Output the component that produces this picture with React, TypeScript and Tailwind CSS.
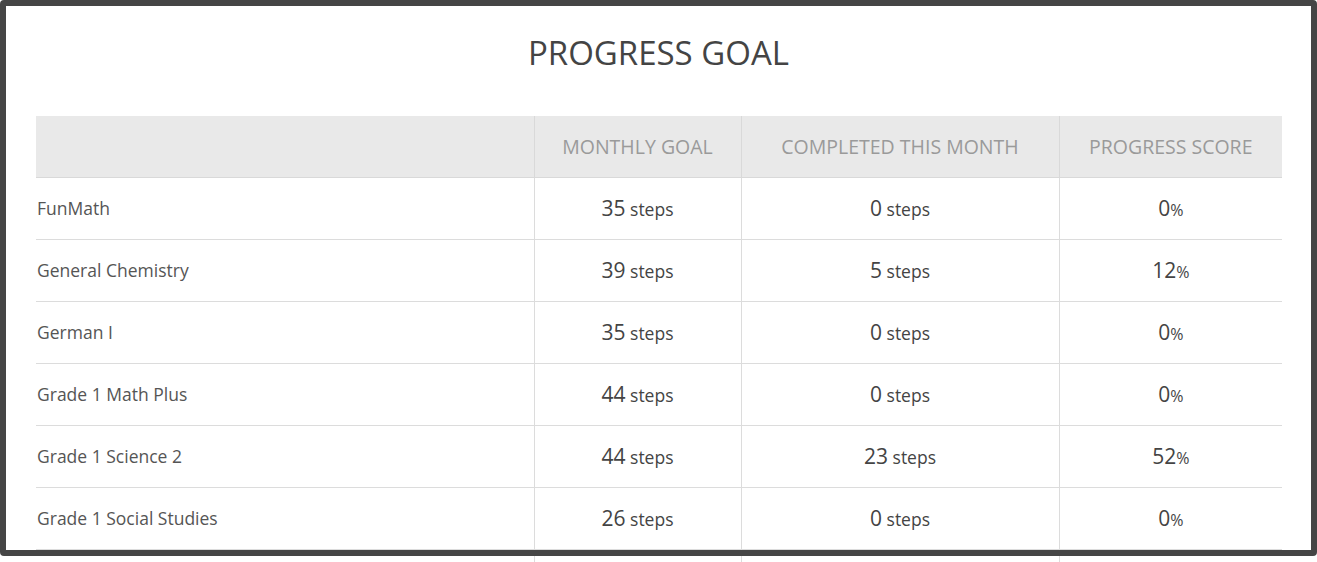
import React from 'react'

type Row = {
  name: string
  goal: number
  done: number
  score: number
}

const rows: Row[] = [
  { name: 'FunMath', goal: 35, done: 0, score: 0 },
  { name: 'General Chemistry', goal: 39, done: 5, score: 12 },
  { name: 'German I', goal: 35, done: 0, score: 0 },
  { name: 'Grade 1 Math Plus', goal: 44, done: 0, score: 0 },
  { name: 'Grade 1 Science 2', goal: 44, done: 23, score: 52 },
  { name: 'Grade 1 Social Studies', goal: 26, done: 0, score: 0 },
]

const Steps = ({ n }: { n: number }) => (
  <>
    <span className="text-[21px]">{n}</span>
    <span className="text-[17.5px]"> steps</span>
  </>
)

const App = () => {
  return (
    <div
      className="relative h-[562px] w-full overflow-hidden bg-white text-[#444]"
      style={{ fontFamily: '"Open Sans", "Liberation Sans", sans-serif' }}
    >
      <div className="px-[36px] pt-[30px]">
        <h1 className="text-center text-[33px] leading-[46px] font-normal text-[#444]">PROGRESS GOAL</h1>
        <table className="mt-[40px] w-[1246px] table-fixed border-collapse">
          <colgroup>
            <col className="w-[498px]" />
            <col className="w-[207px]" />
            <col className="w-[318px]" />
            <col className="w-[223px]" />
          </colgroup>
          <thead>
            <tr className="h-[61px] bg-[#e9e9e9] text-[19.5px] text-[#9a9a9a]">
              <th className="border-b border-[#d9d9d9] font-normal"></th>
              <th className="border-b border-l border-[#d9d9d9] font-normal">MONTHLY GOAL</th>
              <th className="border-b border-l border-[#d9d9d9] font-normal">COMPLETED THIS MONTH</th>
              <th className="border-b border-l border-[#d9d9d9] font-normal">PROGRESS SCORE</th>
            </tr>
          </thead>
          <tbody>
            {rows.map((r) => (
              <tr key={r.name} className="h-[62px] border-b border-[#dcdcdc]">
                <td className="pl-[1px] text-[17.5px] text-[#555]">{r.name}</td>
                <td className="border-l border-[#dcdcdc] pt-[2px] text-center text-[#444]">
                  <Steps n={r.goal} />
                </td>
                <td className="border-l border-[#dcdcdc] pt-[2px] text-center text-[#444]">
                  <Steps n={r.done} />
                </td>
                <td className="border-l border-[#dcdcdc] pt-[2px] text-center text-[#444]">
                  <span className="text-[21px]">{r.score}</span>
                  <span className="text-[16px]">%</span>
                </td>
              </tr>
            ))}
            <tr className="h-[62px]">
              <td></td>
              <td className="border-l border-[#dcdcdc]"></td>
              <td className="border-l border-[#dcdcdc]"></td>
              <td className="border-l border-[#dcdcdc]"></td>
            </tr>
          </tbody>
        </table>
      </div>
      {/* screenshot frame drawn over the page */}
      <div className="pointer-events-none absolute left-0 top-0 h-[556px] w-[1317px] rounded-[4px] border-[6px] border-[#454545]"></div>
    </div>
  )
}

export default App
